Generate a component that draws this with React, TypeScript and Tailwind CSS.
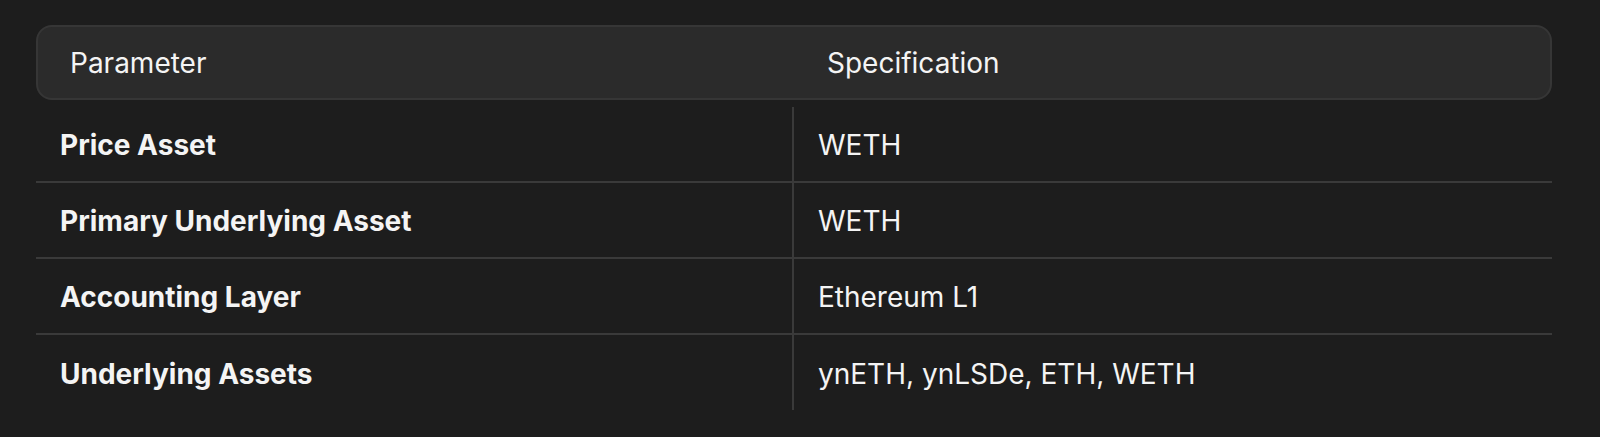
const rows = [
  { label: "Price Asset", value: "WETH" },
  { label: "Primary Underlying Asset", value: "WETH" },
  { label: "Accounting Layer", value: "Ethereum L1" },
  { label: "Underlying Assets", value: "ynETH, ynLSDe, ETH, WETH" },
];

export default function App() {
  return (
    <div
      className="min-h-[437px] w-full bg-[#1d1d1d] pt-[25px] pl-[36px] pr-[48px] text-[#f4f4f4]"
      style={{ fontFamily: "Inter, 'Noto Sans', sans-serif" }}
    >
      {/* Header */}
      <div className="grid h-[75px] grid-cols-[757px_1fr] items-center rounded-2xl border-2 border-[#363636] bg-[#2b2b2b] text-[28px]">
        <div className="pl-[32px]">Parameter</div>
        <div className="pl-[32px]">Specification</div>
      </div>

      {/* Body */}
      <div className="mt-[7px]">
        {rows.map((row, i) => (
          <div
            key={row.label}
            className={
              i < rows.length - 1
                ? "grid h-[76px] grid-cols-[756px_1fr] border-b-2 border-[#3a3a3a]"
                : "grid h-[75px] grid-cols-[756px_1fr]"
            }
          >
            <div className="flex items-center pl-[24px] pt-[2px] text-[28px] font-bold">
              {row.label}
            </div>
            <div className="flex items-center border-l-2 border-[#3a3a3a] pl-[24px] pt-[2px] text-[28px]">
              {row.value}
            </div>
          </div>
        ))}
      </div>
    </div>
  );
}
